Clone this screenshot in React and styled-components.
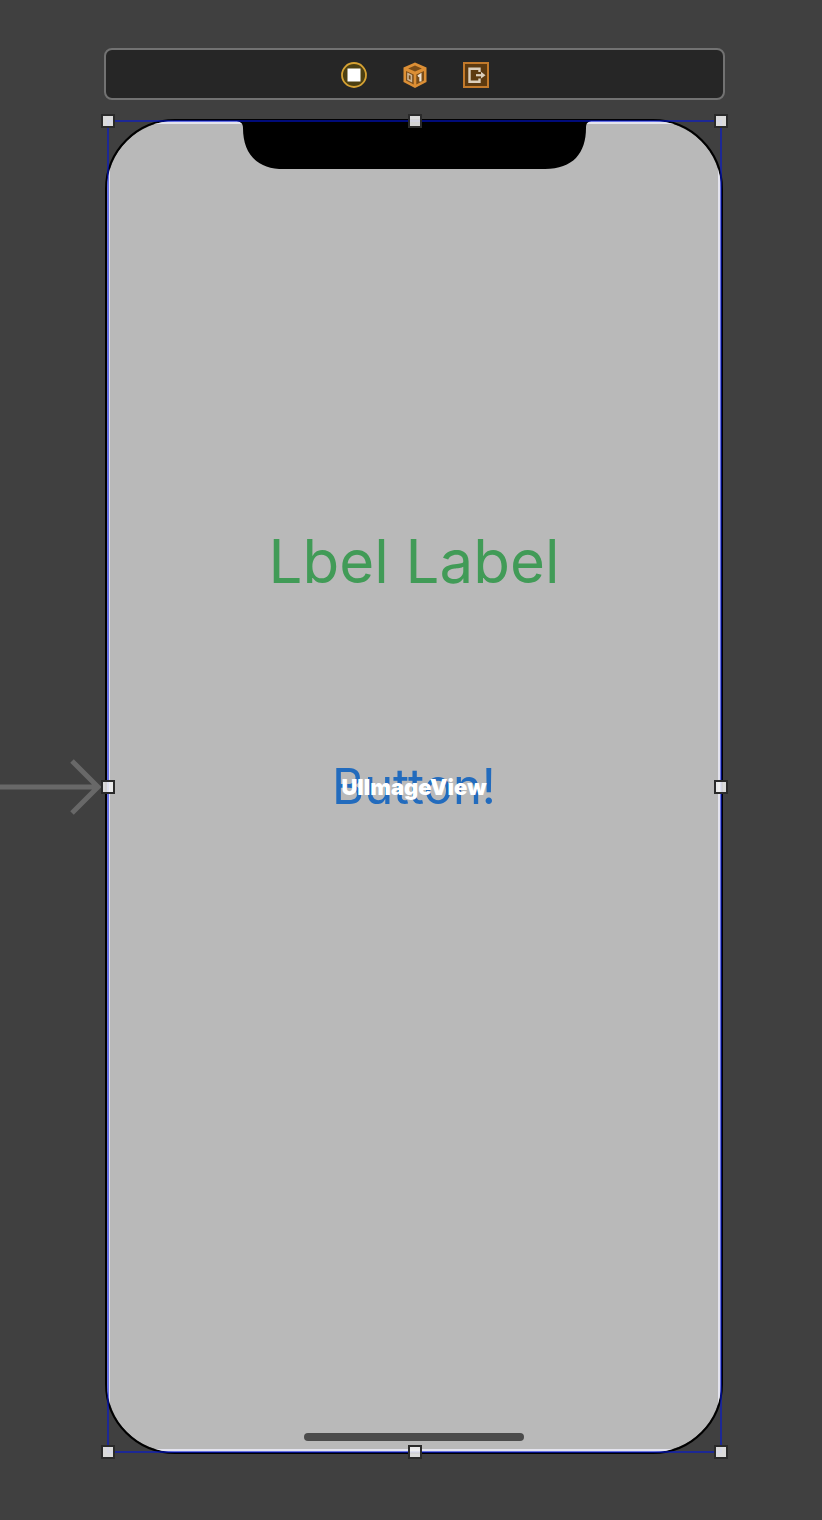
import React, { useState } from 'react';
import styled, { createGlobalStyle } from 'styled-components';

const GlobalStyle = createGlobalStyle`
  * {
    box-sizing: border-box;
  }

  body {
    margin: 0;
    background: #404040;
    font-family: Inter, 'Liberation Sans', sans-serif;
  }

  button {
    padding: 0;
    border: 0;
    background: none;
    font: inherit;
    cursor: pointer;
  }
`;

const HANDLES = [
  ['0%', '0%'],
  ['50%', '0%'],
  ['100%', '0%'],
  ['0%', '50%'],
  ['100%', '50%'],
  ['0%', '100%'],
  ['50%', '100%'],
  ['100%', '100%'],
];

function ControllerIcon() {
  return (
    <svg width="28" height="28" viewBox="0 0 28 28">
      <circle cx="14" cy="14" r="12" fill="#4d4012" stroke="#d6a233" strokeWidth="1.8" />
      <rect x="7.5" y="7.5" width="13" height="13" fill="#fff" />
    </svg>
  );
}

function ResponderIcon() {
  return (
    <svg width="28" height="28" viewBox="0 0 28 28">
      <path d="M14 1.5 25.5 6.5V21L14 27 2.5 21V6.5Z" fill="#dc8f35" />
      <path d="M14 4.6 20.8 7.6 14 10.6 7.2 7.6Z" fill="#7a4d19" />
      <path d="M5 10 12.7 13.4V23.6L5 19.6Z" fill="#7a4d19" />
      <path d="M23 10 15.3 13.4V23.6L23 19.6Z" fill="#7a4d19" />
      <path
        d="M7 12.8 10.4 14.4V20.2L7 18.5Z"
        fill="none"
        stroke="#cdb595"
        strokeWidth="1.6"
      />
      <path d="M17 15.4 19.4 13.8V20.6" fill="none" stroke="#eee3d3" strokeWidth="2.2" />
    </svg>
  );
}

function ExitIcon() {
  return (
    <svg width="28" height="28" viewBox="0 0 28 28">
      <rect x="2" y="2" width="24" height="24" fill="#5d3a10" stroke="#c37a2b" strokeWidth="2" />
      <path
        d="M17.5 11V7.8H7.5V20.8H17.5V17.6"
        fill="none"
        stroke="#dccfbc"
        strokeWidth="2.4"
      />
      <path d="M14 14.2H20" stroke="#dccfbc" strokeWidth="2.2" />
      <path d="M19 10.8 23.5 14.2 19 17.6Z" fill="#dccfbc" />
    </svg>
  );
}

const DOCK_ITEMS = [
  { title: 'View Controller', Icon: ControllerIcon },
  { title: 'First Responder', Icon: ResponderIcon },
  { title: 'Exit', Icon: ExitIcon },
];

function Selection() {
  return (
    <Frame>
      {HANDLES.map(([x, y]) => (
        <Handle key={x + y} $x={x} $y={y} />
      ))}
    </Frame>
  );
}

function App() {
  const [selected, setSelected] = useState(true);

  return (
    <Canvas>
      <GlobalStyle />
      <Dock>
        {DOCK_ITEMS.map(({ title, Icon }) => (
          <DockButton key={title} type="button" aria-label={title}>
            <Icon />
          </DockButton>
        ))}
      </Dock>

      <Scene>
        <EntryArrow viewBox="0 0 102 60" aria-hidden="true">
          <path d="M0 30H99M72 4 98 30 72 56" />
        </EntryArrow>
        <Device onClick={() => setSelected(true)}>
          <Notch viewBox="0 0 358 50" aria-hidden="true">
            <path d="M0 0V2C5 2 8 4 8 9C8 34 21 50 49 50H310C338 50 351 34 351 9C351 4 353 2 358 2V0Z" />
          </Notch>
          <Title>Lbel Label</Title>
          <ButtonRow>
            <ActionButton type="button">Button!</ActionButton>
            <ViewName>UIImageView</ViewName>
          </ButtonRow>
          <HomeIndicator />
        </Device>
        {selected && <Selection />}
      </Scene>
    </Canvas>
  );
}

export default App;

const Canvas = styled.main`
  padding: 48px 97px 66px 104px;
  overflow: hidden;
`;

const Dock = styled.div`
  display: flex;
  align-items: center;
  justify-content: center;
  gap: 33px;
  height: 52px;
  padding-top: 2px;
  border: 2px solid #727272;
  border-radius: 8px;
  background: #262626;
`;

const DockButton = styled.button`
  display: flex;
`;

const Scene = styled.section`
  position: relative;
  margin: 19px 2px 0 1px;
`;

const Device = styled.div`
  position: relative;
  display: flex;
  flex-direction: column;
  align-items: center;
  aspect-ratio: 618 / 1335;
  border: 2px solid #000;
  border-radius: 70px;
  background: #b9b9b9;
  background-clip: padding-box;
  overflow: hidden;

  /* square edge of the image view, cut off by the rounded screen */
  &::before {
    content: '';
    position: absolute;
    inset: 0;
    border: 3px solid #e4e4ee;
  }
`;

const Notch = styled.svg`
  position: absolute;
  top: -2px;
  left: 50%;
  width: 358px;
  height: 50px;
  transform: translateX(-50%);
`;

const Title = styled.h1`
  margin: 400px 0 0;
  color: #419b57;
  font-size: 60px;
  font-weight: 400;
  line-height: 80px;
`;

const ButtonRow = styled.div`
  display: grid;
  place-items: center;
  margin-top: 156px;

  > * {
    grid-area: 1 / 1;
  }
`;

const ActionButton = styled.button`
  && {
    color: #226bbd;
    font-size: 49px;
    line-height: 60px;
  }
`;

const ViewName = styled.span`
  color: #fff;
  font-size: 22px;
  font-weight: 900;
  line-height: 28px;
  pointer-events: none;
`;

const HomeIndicator = styled.div`
  width: 220px;
  height: 8px;
  margin: auto 0 11px;
  border-radius: 4px;
  background: #4b4b4b;
`;

const Frame = styled.div`
  position: absolute;
  inset: 2px 2px 2px 3px;
  pointer-events: none;

  &::before {
    content: '';
    position: absolute;
    inset: -1px;
    border: 2px solid rgba(0, 20, 220, 0.55);
  }
`;

const Handle = styled.span`
  position: absolute;
  left: ${({ $x }) => $x};
  top: ${({ $y }) => $y};
  width: 14px;
  height: 14px;
  border: 2px solid #2a2a2a;
  background: rgba(240, 240, 240, 0.88);
  background-clip: padding-box;
  transform: translate(-50%, -50%);
`;

const EntryArrow = styled.svg`
  position: absolute;
  top: 50%;
  right: 100%;
  width: 102px;
  height: 60px;
  margin-right: 3px;
  transform: translateY(-50%);
  fill: none;
  stroke: #686868;
  stroke-width: 5px;
`;
